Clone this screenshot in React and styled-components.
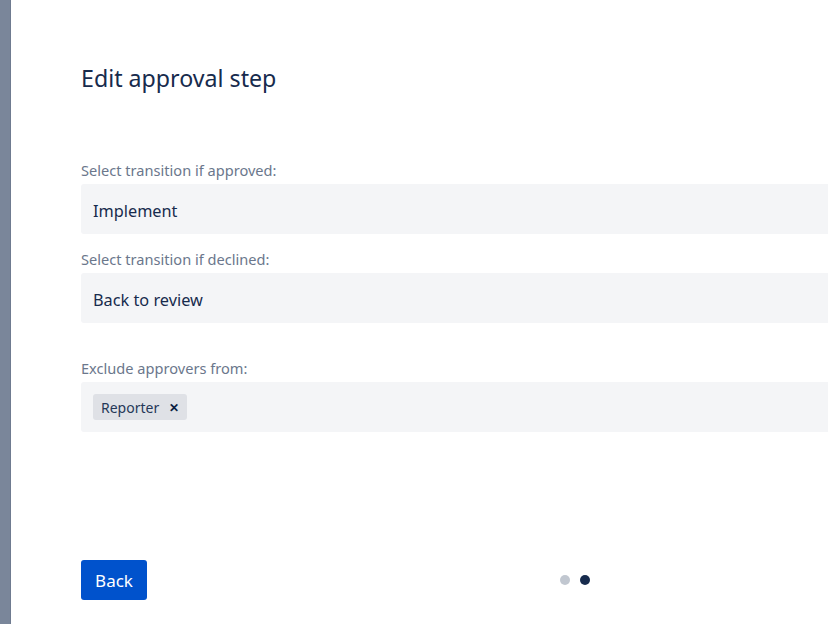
import React from "react"
import styled, { createGlobalStyle } from "styled-components"

const GlobalStyle = createGlobalStyle`
  html, body {
    margin: 0;
    padding: 0;
    background: #7a869a;
    font-family: "Noto Sans", "Open Sans", sans-serif;
  }
`

const Page = styled.div`
  display: flex;
  height: 624px;
  overflow: hidden;
`

const Rail = styled.div`
  width: 10px;
  flex: none;
  background: #7a869a;
  border-right: 1px solid #6f7b90;
`

const Panel = styled.div`
  flex: 1;
  background: #fff;
  padding: 60px 0 24px 70px;
  display: flex;
  flex-direction: column;
`

const Title = styled.h1`
  margin: 0 0 64px;
  font-size: 23.2px;
  font-weight: 400;
  color: #172b4d;
  line-height: 36px;
`

const Label = styled.div`
  font-size: 14.6px;
  color: #6b778c;
  line-height: 20px;
  margin-top: ${(p) => p.$gap || 0}px;
  margin-bottom: 4px;
`

const Field = styled.div`
  box-sizing: border-box;
  height: 50px;
  margin-right: -4px;
  background: #f4f5f7;
  border-radius: 3px 0 0 3px;
  display: flex;
  align-items: center;
  padding: ${(p) => (p.$tags ? "0 12px" : "3px 12px 0")};
  font-size: 16.3px;
  color: #172b4d;
`

const Tag = styled.span`
  display: inline-flex;
  align-items: center;
  gap: 10px;
  height: 26px;
  padding: 0 8px;
  background: #dfe1e6;
  border-radius: 3px;
  font-size: 14px;
  color: #253858;
`

const Close = styled.span`
  font-size: 12px;
  font-weight: 700;
  color: #091e42;
`

const Footer = styled.div`
  margin-top: auto;
  display: flex;
  align-items: center;
`

const Button = styled.button`
  width: 66px;
  height: 40px;
  padding-top: 2px;
  border: 0;
  border-radius: 3px;
  background: #0052cc;
  color: #fff;
  font-family: inherit;
  font-size: 17px;
`

const Dots = styled.div`
  display: flex;
  gap: 10px;
  margin-left: 413px;
`

const Dot = styled.span`
  width: 10px;
  height: 10px;
  border-radius: 50%;
  background: ${(p) => (p.$active ? "#172b4d" : "#c1c7d0")};
`

export default function App() {
  return (
    <>
      <GlobalStyle />
      <Page>
        <Rail />
        <Panel>
          <Title>Edit approval step</Title>
          <Label>Select transition if approved:</Label>
          <Field>Implement</Field>
          <Label $gap={15}>Select transition if declined:</Label>
          <Field>Back to review</Field>
          <Label $gap={35}>Exclude approvers from:</Label>
          <Field $tags>
            <Tag>
              Reporter <Close>✕</Close>
            </Tag>
          </Field>
          <Footer>
            <Button>Back</Button>
            <Dots>
              <Dot />
              <Dot $active />
            </Dots>
          </Footer>
        </Panel>
      </Page>
    </>
  )
}
